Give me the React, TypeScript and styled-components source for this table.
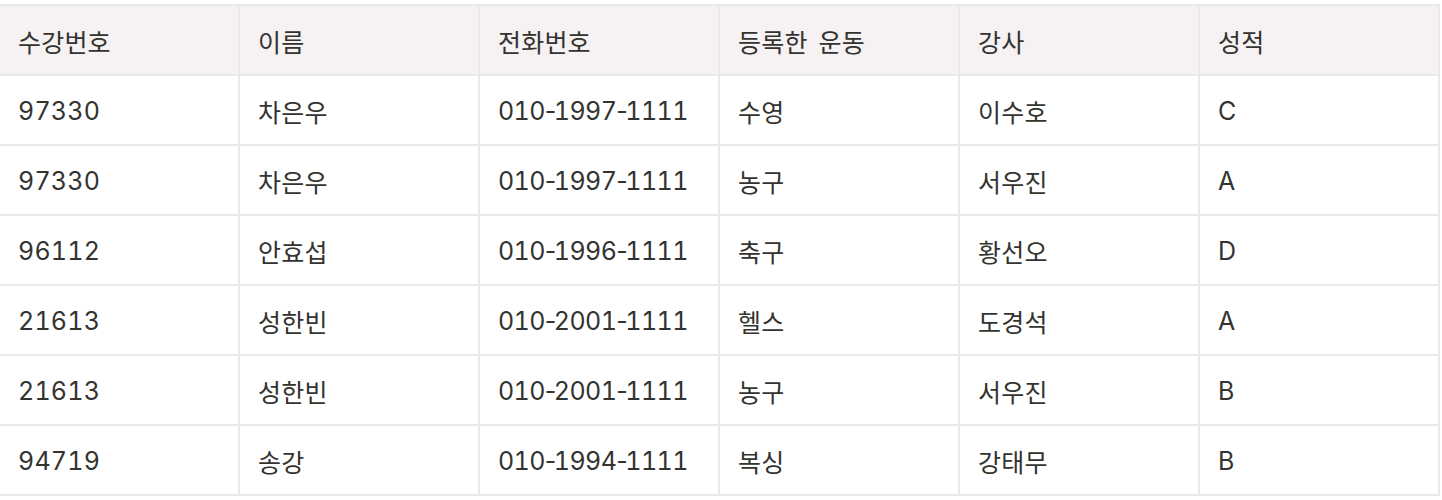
import styled, { createGlobalStyle } from "styled-components";

const GlobalStyle = createGlobalStyle`
  body {
    margin: 0;
    background: #ffffff;
    font-family: "Inter", "Noto Sans CJK KR", sans-serif;
  }
`;

type Enrollment = {
  id: string;
  name: string;
  phone: string;
  sport: string;
  coach: string;
  grade: string;
};

const columns = ["수강번호", "이름", "전화번호", "등록한 운동", "강사", "성적"];

const rows: Enrollment[] = [
  { id: "97330", name: "차은우", phone: "010-1997-1111", sport: "수영", coach: "이수호", grade: "C" },
  { id: "97330", name: "차은우", phone: "010-1997-1111", sport: "농구", coach: "서우진", grade: "A" },
  { id: "96112", name: "안효섭", phone: "010-1996-1111", sport: "축구", coach: "황선오", grade: "D" },
  { id: "21613", name: "성한빈", phone: "010-2001-1111", sport: "헬스", coach: "도경석", grade: "A" },
  { id: "21613", name: "성한빈", phone: "010-2001-1111", sport: "농구", coach: "서우진", grade: "B" },
  { id: "94719", name: "송강", phone: "010-1994-1111", sport: "복싱", coach: "강태무", grade: "B" },
];

// phone numbers: tabular digits, but keep the dash narrow
const Phone = ({ value }: { value: string }) => {
  const parts = value.split("-");
  return (
    <PhoneText>
      {parts.map((p, i) => (
        <span key={i}>
          {i > 0 && <Dash>-</Dash>}
          {p}
        </span>
      ))}
    </PhoneText>
  );
};

const App = () => {
  return (
    <Page>
      <GlobalStyle />
      <Table>
        <thead>
          <tr>
            {columns.map((c) => (
              <HeadCell key={c}>{c}</HeadCell>
            ))}
          </tr>
        </thead>
        <tbody>
          {rows.map((r, i) => (
            <tr key={i}>
              <Cell>{r.id}</Cell>
              <Cell>{r.name}</Cell>
              <Cell>
                <Phone value={r.phone} />
              </Cell>
              <Cell>{r.sport}</Cell>
              <Cell>{r.coach}</Cell>
              <Cell>{r.grade}</Cell>
            </tr>
          ))}
        </tbody>
      </Table>
    </Page>
  );
};

export default App;

const Page = styled.div`
  padding-top: 4px;
`;

const Table = styled.table`
  width: 1440px;
  table-layout: fixed;
  border-collapse: separate;
  border-spacing: 0;
  border-top: 2px solid #e9e9e9;
`;

const Cell = styled.td`
  box-sizing: border-box;
  width: 240px;
  height: 70px;
  padding: 2px 0 0 18px;
  border-right: 2px solid #e9e9e9;
  border-bottom: 2px solid #e9e9e9;
  text-align: left;
  vertical-align: middle;
  font-size: 25px;
  font-weight: 400;
  font-variant-numeric: tabular-nums;
  letter-spacing: 0.2px;
  word-spacing: 4px;
  color: #333330;
  white-space: nowrap;
`;

const HeadCell = styled(Cell).attrs({ as: "th" })`
  height: 70px;
  background: #f6f1f3;
`;

const PhoneText = styled.span`
  letter-spacing: -0.6px;
`;

const Dash = styled.span`
  display: inline-block;
  width: 9px;
  text-align: center;
  font-variant-numeric: normal;
  letter-spacing: 0;
`;
